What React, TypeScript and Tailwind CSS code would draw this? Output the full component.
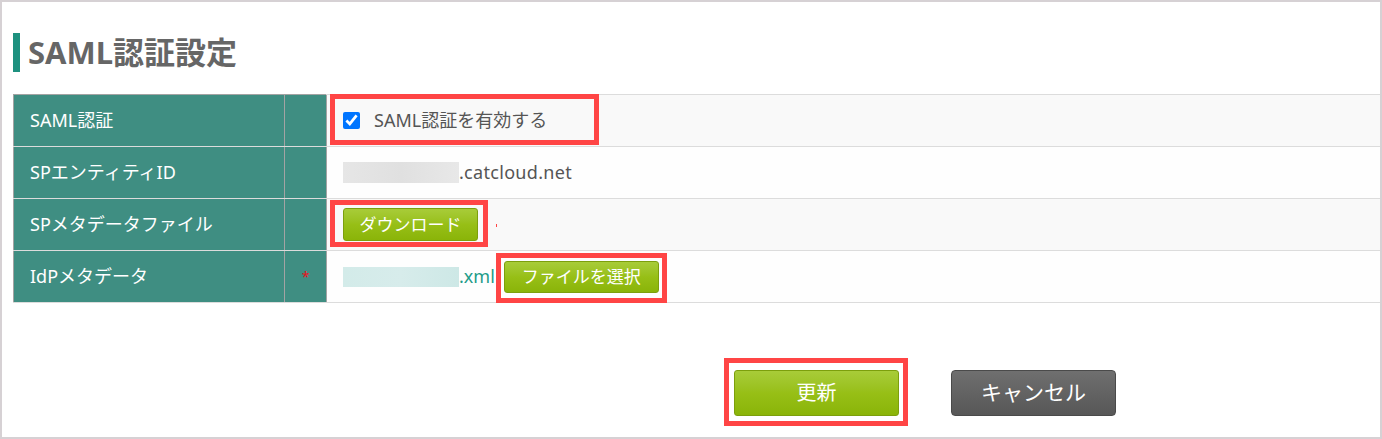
import React from 'react';

const font = { fontFamily: '"Noto Sans", "Noto Sans CJK JP", sans-serif' };

// red annotation frame drawn over an element
const Mark: React.FC<{ className: string }> = ({ className }) => (
  <span className={`pointer-events-none absolute border-[5px] border-[#ff4545] ${className}`} />
);

const greenBtn =
  'rounded-[3px] border border-[#7c9f0c] bg-gradient-to-b from-[#a8cc38] via-[#97bf16] to-[#8ab408] text-white';

interface RowProps {
  label: string;
  required?: boolean;
  first?: boolean;
  shaded?: boolean;
  children: React.ReactNode;
}

const Row: React.FC<RowProps> = ({ label, required, first, shaded, children }) => (
  <div className={`flex ${first ? 'h-[53px] border-t' : 'h-[52px]'} border-b border-[#dcdcdc]`}>
    <div
      className={`flex w-[271px] items-center border-l border-[#a3a3a3] bg-[#3f8e82] pl-4 text-[18px] text-white ${
        first ? '-mt-px border-t' : ''
      }`}
    >
      {label}
    </div>
    <div
      className={`flex w-[42px] items-center justify-center border-l border-[#a3a3a3] bg-[#3f8e82] text-[14px] text-[#e8101a] ${
        first ? '-mt-px border-t' : ''
      }`}
    >
      {required ? '*' : ''}
    </div>
    <div
      className={`flex flex-1 items-center border-l border-[#a3a3a3] pl-4 text-[18px] text-[#555] ${
        shaded ? 'bg-[#f9f9f9]' : 'bg-[#fefefe]'
      }`}
    >
      {children}
    </div>
  </div>
);

export default function App() {
  return (
    <div className="h-[439px] w-[1382px] border-2 border-[#d6d1d4] bg-white" style={font}>
      <div className="pl-[11px] pt-[31px]">
        {/* Title */}
        <div className="flex h-[39px] items-center">
          <div className="h-full w-[7px] bg-[#1e917f]" />
          <h1 className="ml-[8px] text-[31px] font-bold leading-none text-[#666]">SAML認証設定</h1>
        </div>

        {/* Settings table */}
        <div className="mt-[22px]">
          <Row label="SAML認証" first shaded>
            <label className="relative flex items-center">
              <input type="checkbox" checked readOnly className="m-0 h-[17px] w-[17px] accent-[#0075ff]" />
              <span className="ml-[14px]">SAML認証を有効する</span>
              <Mark className="-bottom-[11px] -left-[13px] -right-[52px] -top-[13px]" />
            </label>
          </Row>
          <Row label="SPエンティティID">
            <span className="h-[21px] w-[116px] bg-gradient-to-r from-[#e6e6e6] via-[#e0e0e0] to-[#e8e8e8]" />
            <span className="tracking-[0.3px]">.catcloud.net</span>
          </Row>
          <Row label="SPメタデータファイル" shaded>
            <span className="relative inline-flex">
              <button className={`h-[33px] w-[135px] text-[17px] ${greenBtn}`}>ダウンロード</button>
              <Mark className="-bottom-[6px] -left-[13px] -right-[10px] -top-[8px]" />
            </span>
            <span className="ml-[18px] mt-[2px] h-[3px] w-[1px] bg-[#ff4545]" />
          </Row>
          <Row label="IdPメタデータ" required>
            <span className="h-[20px] w-[116px] bg-gradient-to-r from-[#d3ebe9] via-[#d7eceb] to-[#cde8e6]" />
            <span className="text-[#1e9c8a]">.xml</span>
            <span className="relative ml-[9px] inline-flex">
              <button className={`h-[32px] w-[155px] text-[17px] ${greenBtn}`}>ファイルを選択</button>
              <Mark className="-bottom-[10px] -left-[8px] -right-[8px] -top-[8px]" />
            </span>
          </Row>
        </div>

        {/* Actions */}
        <div className="ml-[721px] mt-[67px] flex gap-[52px]">
          <span className="relative inline-flex">
            <button className={`h-[46px] w-[165px] text-[20px] ${greenBtn}`}>更新</button>
            <Mark className="-bottom-[10px] -left-[10px] -right-[9px] -top-[12px]" />
          </span>
          <button className="h-[46px] w-[165px] rounded-[4px] border border-[#4a4a4a] bg-gradient-to-b from-[#6f6f6f] to-[#575757] text-[21px] text-white">
            キャンセル
          </button>
        </div>
      </div>
    </div>
  );
}
